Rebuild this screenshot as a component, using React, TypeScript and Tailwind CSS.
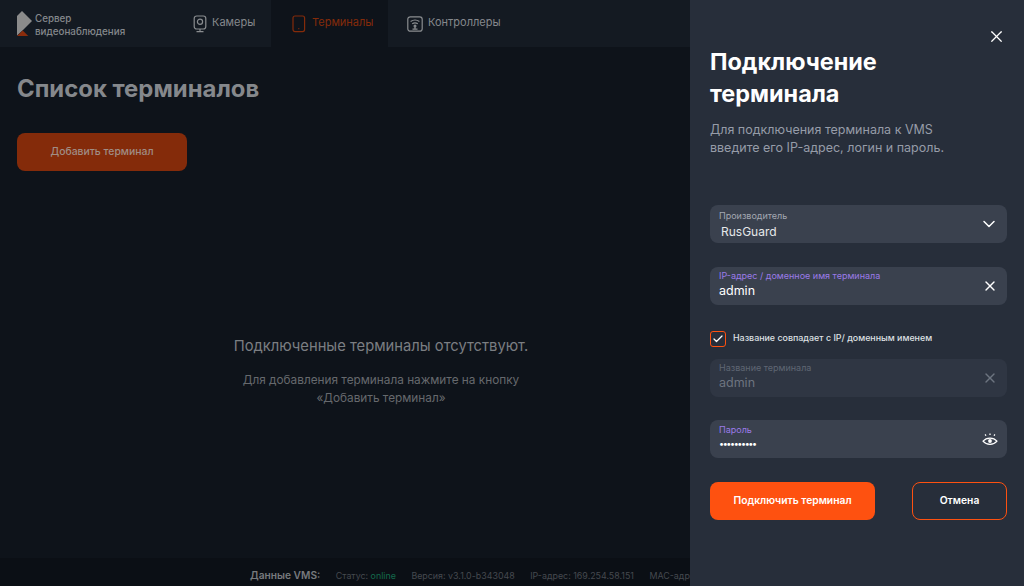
import { ChevronDown, X, Check } from "lucide-react";

function CameraIcon() {
  return (
    <svg width="14" height="18" viewBox="0 0 14 18" fill="none" stroke="#8a8d90" strokeWidth="1.2">
      <rect x="1.2" y="1" width="11.6" height="13" rx="2.5" />
      <circle cx="7" cy="6.8" r="2.6" />
      <path d="M7 14v2.2M3.5 16.6h7" />
    </svg>
  );
}

function TerminalIcon() {
  return (
    <svg width="14" height="18" viewBox="0 0 14 18" fill="none" stroke="#842b0a" strokeWidth="1.2">
      <rect x="1" y="1" width="11.6" height="15.6" rx="2" />
      <path d="M6.3 13.7h1" strokeWidth="1.3" />
    </svg>
  );
}

function ControllerIcon() {
  return (
    <svg width="16" height="16" viewBox="0 0 16 16" fill="none" stroke="#8a8d90" strokeWidth="1.2">
      <rect x="0.8" y="0.8" width="14.4" height="14.4" rx="2.5" />
      <path d="M3.6 5.6c2.6-1.9 6.2-1.9 8.8 0M5.2 7.8c1.7-1.1 3.9-1.1 5.6 0" />
      <circle cx="8" cy="10" r="0.9" />
      <path d="M8 11v2M5.5 13.2h5" />
    </svg>
  );
}

function EyeIcon() {
  return (
    <svg width="16" height="13" viewBox="0 0 16 13" fill="none" stroke="#ffffff" strokeWidth="1.2">
      <path d="M1 8.2c3.6-4.2 10.4-4.2 14 0-3.6 4.2-10.4 4.2-14 0Z" />
      <circle cx="8" cy="8" r="1.9" fill="#ffffff" stroke="none" />
      <path d="M8 .5v1.5M3.2 1.4l.7 1.4M12.8 1.4l-.7 1.4" strokeWidth="1.3" />
    </svg>
  );
}

function Logo() {
  return (
    <svg width="15" height="25" viewBox="0 0 15 25" className="shrink-0">
      <path d="M0 5 5 0l10 10-9 9-6 5.5Z" fill="#8b8b8b" />
      <path d="M0 25l5.7-5.5L11.3 25Z" fill="#8a2c0c" />
    </svg>
  );
}

function Field(props: {
  label: string;
  value: string;
  accent?: boolean;
  disabled?: boolean;
  password?: boolean;
}) {
  const { label, value, accent, disabled, password } = props;

  return (
    <div
      className={`flex h-[38px] items-center justify-between rounded-lg pl-[9px] pr-[9px] ${
        disabled ? "bg-[#2f3643]" : "bg-[#3a414e]"
      }`}
    >
      <div className={`min-w-0 self-start ${password ? "pt-[4px]" : "pt-[3px]"}`}>
        <p
          className={`text-[9px] leading-[11px] ${
            accent ? "text-[#9a7be8]" : disabled ? "text-[#5f6673]" : "text-[#a3a8b2]"
          }`}
        >
          {label}
        </p>
        <p
          className={`leading-[16px] ${disabled ? "text-[#6d7480]" : "text-white"} ${
            password ? "mt-[1px] text-[9px] tracking-[-1.4px]" : "mt-[2px] text-[12.5px]"
          }`}
        >
          {value}
        </p>
      </div>
      {password ? (
        <EyeIcon />
      ) : (
        <X size={16} strokeWidth={2} className={disabled ? "text-[#6d7480]" : "text-white"} />
      )}
    </div>
  );
}

export default function App() {
  return (
    <div className="flex h-[586px] w-[1024px] overflow-hidden bg-[#0e131a] font-['Inter',sans-serif]">
      <div className="flex w-[690px] shrink-0 flex-col overflow-hidden">
        <header className="flex h-[47px] shrink-0 items-stretch bg-[#141a22]">
          <div className="flex w-[172px] items-center gap-[3px] pl-[17px]">
            <Logo />
            <p className="pt-[2px] text-[9.8px] font-medium leading-[13px] text-[#85888c]">
              Сервер
              <br />
              видеонаблюдения
            </p>
          </div>
          <nav className="flex items-stretch">
            <div className="flex w-[99px] items-center gap-[5px] pl-[21px] text-[11px] text-[#85888c]">
              <CameraIcon />
              <span className="mb-[2px]">Камеры</span>
            </div>
            <div className="flex w-[117px] items-center gap-[6px] bg-[#0e131a] pl-[21px] text-[11px] text-[#842b0a]">
              <TerminalIcon />
              <span className="mb-[2px]">Терминалы</span>
            </div>
            <div className="flex items-center gap-[5px] pl-[19px] text-[11px] text-[#85888c]">
              <ControllerIcon />
              <span className="mb-[2px]">Контроллеры</span>
            </div>
          </nav>
        </header>

        <main className="flex min-h-0 flex-1 flex-col pl-[17px]">
          <h1 className="mt-[26px] text-[23.9px] font-bold leading-[32px] text-[#85888c]">Список терминалов</h1>
          <button
            type="button"
            className="mt-[28px] flex h-[38px] w-[170px] items-center justify-center rounded-lg bg-[#842b0a] text-[10.4px] font-medium text-[#a08d85]"
          >
            Добавить терминал
          </button>
          <div className="mt-[165px] pl-[55px] text-center">
            <p className="text-[14.75px] leading-[20px] text-[#7b7e82]">Подключенные терминалы отсутствуют.</p>
            <p className="mt-[15px] text-[11.8px] leading-[18px] text-[#66696d]">
              Для добавления терминала нажмите на кнопку
              <br />
              «Добавить терминал»
            </p>
          </div>
        </main>

        <footer className="flex h-[28px] shrink-0 items-center gap-[15.5px] whitespace-nowrap bg-[#0b0f15] pl-[250px] pt-[8px] text-[8.9px] text-[#45494f]">
          <span className="text-[10.2px] font-semibold text-[#77797d]">Данные VMS:</span>
          <span>
            Статус: <span className="text-[#136a4c]">online</span>
          </span>
          <span>Версия: v3.1.0-b343048</span>
          <span>IP-адрес: 169.254.58.151</span>
          <span>MAC-адрес</span>
        </footer>
      </div>

      <aside className="flex w-[334px] shrink-0 flex-col bg-[#272e3a] pl-5 pr-[17px]">
        <div className="flex justify-end pt-[27px]">
          <X size={19} strokeWidth={1.5} className="mr-[1px] text-white" />
        </div>
        <h2 className="text-[23.4px] font-bold leading-[32px] text-white">
          Подключение
          <br />
          терминала
        </h2>
        <p className="mt-[11px] text-[12.5px] leading-[18px] text-[#969ca8]">
          Для подключения терминала к VMS
          <br />
          введите его IP-адрес, логин и пароль.
        </p>

        <div className="mt-[48px] flex h-[38px] items-center justify-between rounded-lg bg-[#3a414e] pl-[9px] pr-[8px]">
          <div className="self-start pt-[5px]">
            <p className="text-[9px] leading-[11px] text-[#a3a8b2]">Производитель</p>
            <p className="mt-[3px] pl-[2px] text-[12px] leading-[16px] text-[#e6e8ea]">RusGuard</p>
          </div>
          <ChevronDown size={20} strokeWidth={1.8} className="text-white" />
        </div>

        <div className="mt-[24px]">
          <Field label="IP-адрес / доменное имя терминала" value="admin" accent />
        </div>

        <label className="mt-[26px] flex items-center gap-[7px]">
          <span className="flex size-[16px] items-center justify-center rounded-[3px] border border-[#fe5110]">
            <Check size={12} strokeWidth={2.5} className="text-white" />
          </span>
          <span className="mb-[2px] text-[8.9px] font-medium leading-[14px] text-[#dfe1e4]">
            Название совпадает с IP/ доменным именем
          </span>
        </label>

        <div className="mt-[12px]">
          <Field label="Название терминала" value="admin" disabled />
        </div>

        <div className="mt-[23px]">
          <Field label="Пароль" value="••••••••••" accent password />
        </div>

        <div className="mt-[24px] flex justify-between">
          <button
            type="button"
            className="h-[38px] w-[165px] rounded-lg bg-[#fe5110] text-[10.3px] font-semibold text-white"
          >
            Подключить терминал
          </button>
          <button
            type="button"
            className="h-[38px] w-[95px] rounded-lg border border-[#fe5110] text-[10.3px] font-semibold text-white"
          >
            Отмена
          </button>
        </div>
      </aside>
    </div>
  );
}
